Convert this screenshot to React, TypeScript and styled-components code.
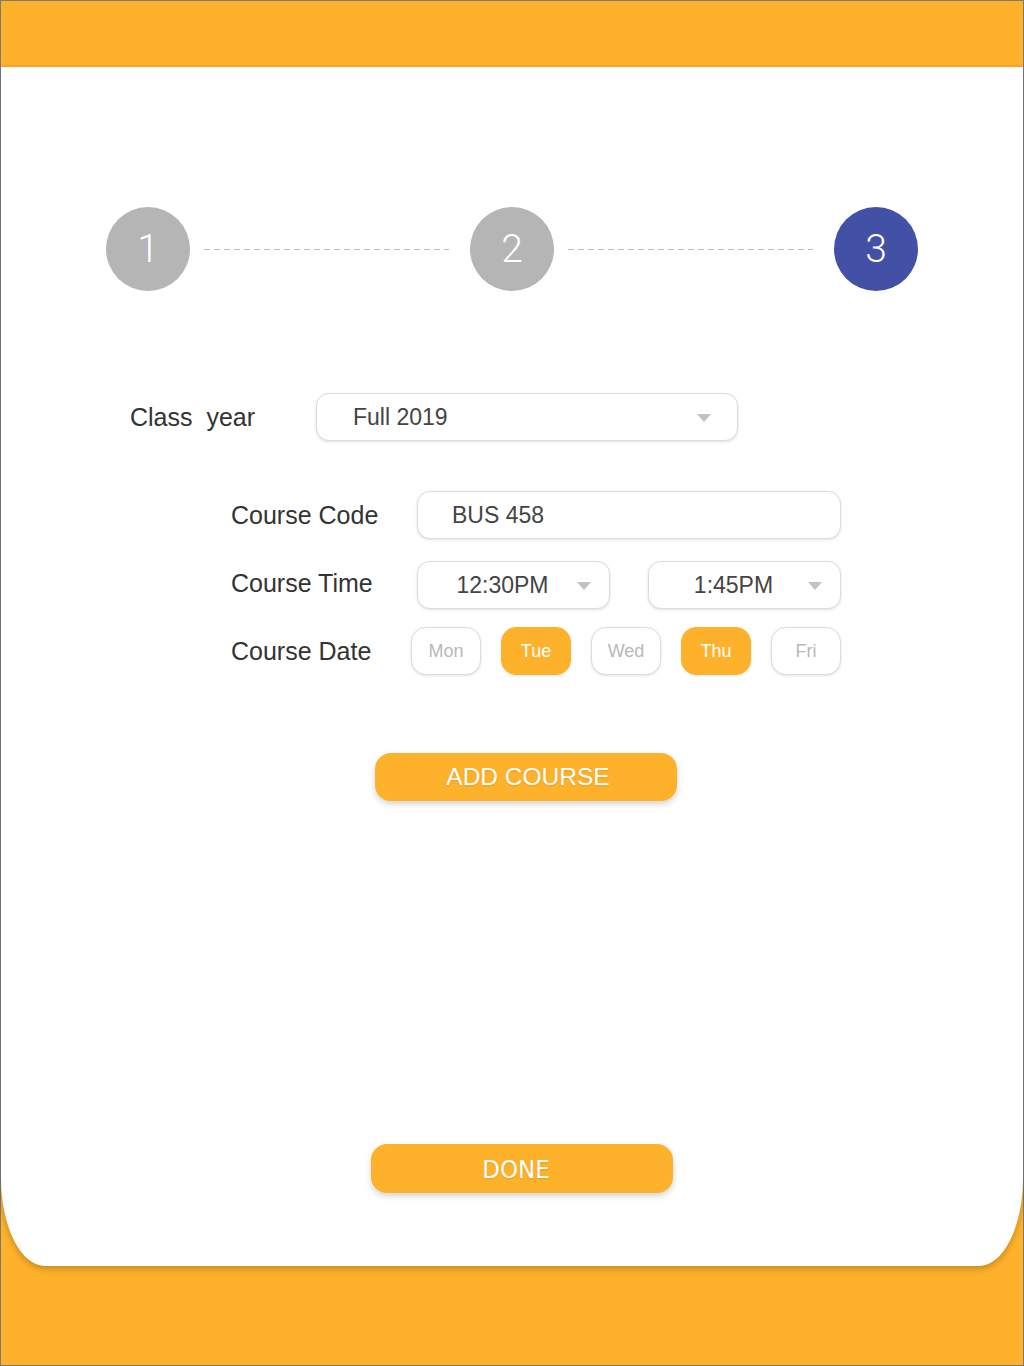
import styled, { createGlobalStyle } from 'styled-components'

const orange = '#FEB12B'

const GlobalStyle = createGlobalStyle`
  body {
    margin: 0;
    font-family: "Liberation Sans", Arial, sans-serif;
  }
`

export const Frame = styled.div`
  width: 1024px;
  height: 1366px;
  box-sizing: border-box;
  border: 1px solid #7a7a7a;
  background: ${orange};
  display: flex;
  flex-direction: column;
`

export const TopBar = styled.div`
  height: 66px;
  flex-shrink: 0;
  background: linear-gradient(to bottom, ${orange} 95%, #f9a923);
`

export const Card = styled.div`
  height: 1199px;
  box-sizing: border-box;
  padding-top: 140px;
  background: #fff;
  border-radius: 0 0 44px 44px / 0 0 88px 88px;
  box-shadow: 0 3px 6px rgba(0, 0, 0, 0.22);
  display: flex;
  flex-direction: column;
`

export const Stepper = styled.div`
  display: flex;
  align-items: center;
  padding: 0 105px;
`

export const Step = styled.div<{ $active?: boolean }>`
  width: 84px;
  height: 84px;
  flex-shrink: 0;
  border-radius: 50%;
  background: ${(p) => (p.$active ? '#4250A5' : '#B5B5B5')};
  color: #fff;
  display: flex;
  align-items: center;
  justify-content: center;
  font-family: Roboto, "Liberation Sans", sans-serif;
  font-weight: 300;
  font-size: 39px;
`

export const Dash = styled.div`
  flex: 1;
  height: 1px;
  margin: 0 21px 0 14px;
  background-image: linear-gradient(to right, #BDBDBD 60%, transparent 60%);
  background-size: 10px 1px;
  background-repeat: repeat-x;
`

export const Form = styled.div`
  margin-top: 102px;
  padding-left: 129px;
  display: flex;
  flex-direction: column;
`

export const Grid = styled.div<{ $shift?: number }>`
  display: grid;
  grid-template-columns: 186px 424px;
  align-items: center;
  row-gap: 20px;
  margin-left: ${(p) => p.$shift || 0}px;
`

export const Label = styled.div`
  font-size: 25px;
  color: #333;
  white-space: pre;
`

export const Field = styled.div<{ $pad?: number }>`
  height: 48px;
  box-sizing: border-box;
  border: 1px solid #DCDCDC;
  border-radius: 13px;
  background: #fff;
  box-shadow: 0 1px 3px rgba(0, 0, 0, 0.13);
  display: flex;
  align-items: center;
  padding: 0 18px 0 ${(p) => p.$pad ?? 34}px;
  font-size: 23px;
  color: #444;
`

export const FieldText = styled.span<{ $center?: boolean }>`
  flex: 1;
  text-align: ${(p) => (p.$center ? 'center' : 'left')};
`

export const Caret = styled.span`
  width: 0;
  height: 0;
  border-left: 7px solid transparent;
  border-right: 7px solid transparent;
  border-top: 8px solid #C2C2C2;
  margin-top: 2px;
`

export const TimeRow = styled.div`
  display: grid;
  grid-template-columns: 1fr 1fr;
  column-gap: 38px;
  margin: 2px 0 -2px;
`

export const DayRow = styled.div`
  display: flex;
  justify-content: space-between;
  width: 430px;
  margin-left: -6px;
`

export const Day = styled.div<{ $on?: boolean }>`
  width: 70px;
  height: 48px;
  box-sizing: border-box;
  border-radius: 15px;
  border: 1px solid ${(p) => (p.$on ? orange : '#DCDCDC')};
  background: ${(p) => (p.$on ? orange : '#fff')};
  color: ${(p) => (p.$on ? '#fff' : '#B8B8B8')};
  box-shadow: 0 1px 3px rgba(0, 0, 0, ${(p) => (p.$on ? 0.08 : 0.12)});
  display: flex;
  align-items: center;
  justify-content: center;
  font-size: 18px;
`

export const ActionButton = styled.button<{ $left: number }>`
  width: 302px;
  height: 48px;
  margin-left: ${(p) => p.$left}px;
  border: none;
  border-radius: 16px;
  background: ${orange};
  color: #fff;
  font-family: "Liberation Sans", Arial, sans-serif;
  font-size: 24.5px;
  text-shadow: 0 1px 2px rgba(0, 0, 0, 0.1);
  box-shadow: 0 3px 6px rgba(0, 0, 0, 0.18);
  padding: 0 0 0 4px;
`

export const AddButton = styled(ActionButton)`
  margin-top: 78px;
`

export const DoneButton = styled(ActionButton)`
  margin-top: auto;
  margin-bottom: 73px;
  height: 49px;
  padding: 0 12px 0 0;
  font-family: "DejaVu Sans Condensed", "DejaVu Sans", sans-serif;
  font-stretch: condensed;
  font-size: 25.5px;
`

const days = [
  { name: 'Mon', on: false },
  { name: 'Tue', on: true },
  { name: 'Wed', on: false },
  { name: 'Thu', on: true },
  { name: 'Fri', on: false },
]

export default function App() {
  return (
    <>
      <GlobalStyle />
      <Frame>
        <TopBar />
        <Card>
          <Stepper>
            <Step>1</Step>
            <Dash />
            <Step>2</Step>
            <Dash />
            <Step $active>3</Step>
          </Stepper>

          <Form>
            <Grid>
              <Label>Class  year</Label>
              <Field $pad={36} style={{ width: 422, paddingRight: 26 }}>
                <FieldText>Full 2019</FieldText>
                <Caret />
              </Field>
            </Grid>

            <Grid $shift={101} style={{ marginTop: 50 }}>
              <Label>Course Code</Label>
              <Field>
                <FieldText>BUS 458</FieldText>
              </Field>

              <Label>Course Time</Label>
              <TimeRow>
                <Field $pad={10}>
                  <FieldText $center>12:30PM</FieldText>
                  <Caret />
                </Field>
                <Field $pad={10}>
                  <FieldText $center>1:45PM</FieldText>
                  <Caret />
                </Field>
              </TimeRow>

              <Label>Course Date</Label>
              <DayRow>
                {days.map((d) => (
                  <Day key={d.name} $on={d.on}>{d.name}</Day>
                ))}
              </DayRow>
            </Grid>
          </Form>

          <AddButton $left={374}>ADD COURSE</AddButton>
          <DoneButton $left={370}>DONE</DoneButton>
        </Card>
      </Frame>
    </>
  )
}
